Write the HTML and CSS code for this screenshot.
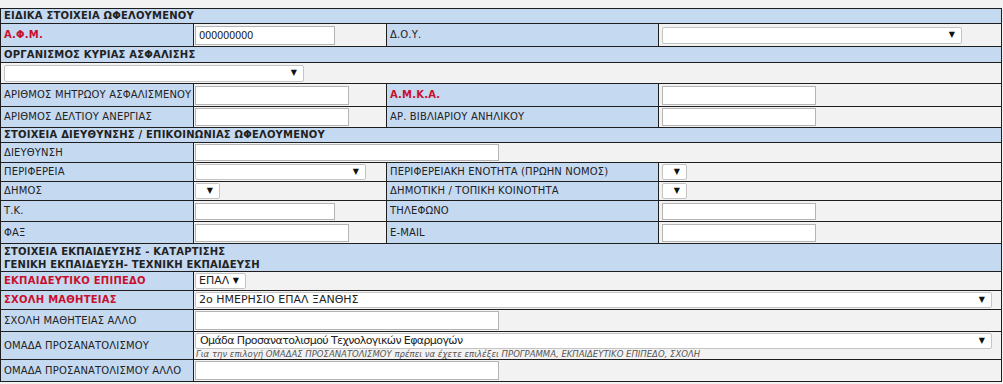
FILE: index.html
```html
<!DOCTYPE html>
<html lang="el">
<head>
<meta charset="utf-8">
<title>Ειδικά στοιχεία ωφελούμενου</title>
<link rel="stylesheet" href="styles.css">
</head>
<body>
<div class="page">
<table class="form">
  <colgroup>
    <col class="c1"><col class="c2"><col class="c3"><col class="c4">
  </colgroup>
  <tr class="hdr r15"><td colspan="4">ΕΙΔΙΚΑ ΣΤΟΙΧΕΙΑ ΩΦΕΛΟΥΜΕΝΟΥ</td></tr>
  <tr class="r23">
    <td class="lbl req">Α.Φ.Μ.</td>
    <td class="val"><input class="inp w140 num" type="text" value="000000000"></td>
    <td class="lbl">Δ.Ο.Υ.</td>
    <td class="val v4"><span class="sw"><select class="sel w300"><option></option></select></span></td>
  </tr>
  <tr class="hdr r16"><td colspan="4">ΟΡΓΑΝΙΣΜΟΣ ΚΥΡΙΑΣ ΑΣΦΑΛΙΣΗΣ</td></tr>
  <tr class="r21">
    <td class="val vfull" colspan="4"><span class="sw"><select class="sel w300"><option></option></select></span></td>
  </tr>
  <tr class="r23">
    <td class="lbl">ΑΡΙΘΜΟΣ ΜΗΤΡΩΟΥ ΑΣΦΑΛΙΣΜΕΝΟΥ</td>
    <td class="val"><input class="inp w154" type="text"></td>
    <td class="lbl req">Α.Μ.Κ.Α.</td>
    <td class="val v4"><input class="inp w154" type="text"></td>
  </tr>
  <tr class="r21">
    <td class="lbl">ΑΡΙΘΜΟΣ ΔΕΛΤΙΟΥ ΑΝΕΡΓΙΑΣ</td>
    <td class="val"><input class="inp w154 h18" type="text"></td>
    <td class="lbl">ΑΡ. ΒΙΒΛΙΑΡΙΟΥ ΑΝΗΛΙΚΟΥ</td>
    <td class="val v4"><input class="inp w154 h18" type="text"></td>
  </tr>
  <tr class="hdr r15"><td colspan="4">ΣΤΟΙΧΕΙΑ ΔΙΕΥΘΥΝΣΗΣ / ΕΠΙΚΟΙΝΩΝΙΑΣ ΩΦΕΛΟΥΜΕΝΟΥ</td></tr>
  <tr class="r20">
    <td class="lbl">ΔΙΕΥΘΥΝΣΗ</td>
    <td class="val" colspan="3"><input class="inp w304 h17" type="text"></td>
  </tr>
  <tr class="r19">
    <td class="lbl">ΠΕΡΙΦΕΡΕΙΑ</td>
    <td class="val"><span class="sw"><select class="sel w171"><option></option></select></span></td>
    <td class="lbl">ΠΕΡΙΦΕΡΕΙΑΚΗ ΕΝΟΤΗΤΑ (ΠΡΩΗΝ ΝΟΜΟΣ)</td>
    <td class="val v4"><span class="sw"><select class="sel w25"><option></option></select></span></td>
  </tr>
  <tr class="r19">
    <td class="lbl">ΔΗΜΟΣ</td>
    <td class="val"><span class="sw"><select class="sel w25"><option></option></select></span></td>
    <td class="lbl">ΔΗΜΟΤΙΚΗ / ΤΟΠΙΚΗ ΚΟΙΝΟΤΗΤΑ</td>
    <td class="val v4"><span class="sw"><select class="sel w25"><option></option></select></span></td>
  </tr>
  <tr class="r21">
    <td class="lbl">Τ.Κ.</td>
    <td class="val"><input class="inp w140 h17" type="text"></td>
    <td class="lbl">ΤΗΛΕΦΩΝΟ</td>
    <td class="val v4"><input class="inp w154 h17" type="text"></td>
  </tr>
  <tr class="r22">
    <td class="lbl">ΦΑΞ</td>
    <td class="val"><input class="inp w154 h18" type="text"></td>
    <td class="lbl">E-MAIL</td>
    <td class="val v4"><input class="inp w154 h18" type="text"></td>
  </tr>
  <tr class="hdr hdr2 r28"><td colspan="4">ΣΤΟΙΧΕΙΑ ΕΚΠΑΙΔΕΥΣΗΣ - ΚΑΤΑΡΤΙΣΗΣ<br>ΓΕΝΙΚΗ ΕΚΠΑΙΔΕΥΣΗ- ΤΕΧΝΙΚΗ ΕΚΠΑΙΔΕΥΣΗ</td></tr>
  <tr class="r19">
    <td class="lbl req">ΕΚΠΑΙΔΕΥΤΙΚΟ ΕΠΙΠΕΔΟ</td>
    <td class="val" colspan="3"><span class="sw"><select class="sel w51"><option>ΕΠΑΛ</option></select></span></td>
  </tr>
  <tr class="r19">
    <td class="lbl req">ΣΧΟΛΗ ΜΑΘΗΤΕΙΑΣ</td>
    <td class="val" colspan="3"><span class="sw"><select class="sel wfull"><option>2ο ΗΜΕΡΗΣΙΟ ΕΠΑΛ ΞΑΝΘΗΣ</option></select></span></td>
  </tr>
  <tr class="r22">
    <td class="lbl">ΣΧΟΛΗ ΜΑΘΗΤΕΙΑΣ ΑΛΛΟ</td>
    <td class="val" colspan="3"><input class="inp w304" type="text"></td>
  </tr>
  <tr class="r28">
    <td class="lbl">ΟΜΑΔΑ ΠΡΟΣΑΝΑΤΟΛΙΣΜΟΥ</td>
    <td class="val vtop" colspan="3">
      <span class="sw"><select class="sel wfull lower"><option>Ομάδα Προσανατολισμού Τεχνολογικών Εφαρμογών</option></select></span>
      <div class="note">Για την επιλογή ΟΜΑΔΑΣ ΠΡΟΣΑΝΑΤΟΛΙΣΜΟΥ πρέπει να έχετε επιλέξει ΠΡΟΓΡΑΜΜΑ, ΕΚΠΑΙΔΕΥΤΙΚΟ ΕΠΙΠΕΔΟ, ΣΧΟΛΗ</div>
    </td>
  </tr>
  <tr class="r22">
    <td class="lbl">ΟΜΑΔΑ ΠΡΟΣΑΝΑΤΟΛΙΣΜΟΥ ΑΛΛΟ</td>
    <td class="val" colspan="3"><input class="inp w304" type="text"></td>
  </tr>
</table>
</div>
</body>
</html>
```

FILE: styles.css
```css
html, body {
  margin: 0;
  padding: 0;
  background: #f2f2f2;
}
.page {
  padding-top: 8px;
}
.form {
  border-collapse: collapse;
  table-layout: fixed;
  width: 1001px;
  font-family: "DejaVu Sans", Verdana, sans-serif;
  font-size: 10px;
  color: #222;
}
.c1 { width: 193px; }
.c2 { width: 193px; }
.c3 { width: 272px; }
.c4 { width: 343px; }
.form td {
  border: 1px solid #1e1e1e;
  padding: 0 1px 0 3px;
  vertical-align: middle;
  white-space: nowrap;
  overflow: hidden;
  line-height: 12px;
}
.hdr td {
  background: #c5d9f1;
  font-weight: bold;
  letter-spacing: 0.2px;
}
.hdr2 td {
  line-height: 13px;
  padding-top: 1px;
}
.form td.lbl {
  background: #c5d9f1;
  letter-spacing: 0.15px;
}
.form td.req {
  color: #c8102e;
  font-weight: bold;
  letter-spacing: 0.25px;
}
.form td.val {
  background: #f2f2f2;
  padding-left: 1px;
}
.form td.v4 { padding-left: 3px; }
.form td.vfull { padding-left: 3px; }
.form td.vtop { vertical-align: top; padding-top: 1px; }
.r15 { height: 15px; }
.r16 { height: 16px; }
.r19 { height: 19px; }
.r20 { height: 20px; }
.r21 { height: 21px; }
.r22 { height: 22px; }
.r23 { height: 23px; }
.r28 { height: 28px; }
.inp {
  box-sizing: border-box;
  height: 19px;
  margin: 0;
  padding: 0 3px;
  border: 1px solid #b4b4b4;
  background: #fff;
  font-family: "DejaVu Sans", Verdana, sans-serif;
  font-size: 11px;
  color: #222;
  vertical-align: middle;
  outline: none;
}
.num {
  font-size: 10px;
  letter-spacing: -0.35px;
}
.h18 { height: 18px; }
.h17 { height: 17px; }
.w140 { width: 140px; }
.w154 { width: 154px; }
.w304 { width: 304px; }
.sw {
  position: relative;
  display: inline-block;
  vertical-align: middle;
}
.sw::after {
  content: "▼";
  position: absolute;
  right: 7px;
  top: 50%;
  transform: translateY(-50%);
  font-size: 8px;
  line-height: 8px;
  color: #111;
  pointer-events: none;
}
.sel {
  -webkit-appearance: none;
  appearance: none;
  box-sizing: border-box;
  display: block;
  height: 16px;
  margin: 0;
  padding: 0 16px 0 3px;
  border: 1px solid #c4c4c4;
  border-radius: 2px;
  background: #fff;
  font-family: "DejaVu Sans", Verdana, sans-serif;
  font-size: 11px;
  line-height: 14px;
  color: #222;
  outline: none;
}
.w300 { width: 300px; height: 17px; }
.w171 { width: 171px; }
.w25 { width: 25px; }
.w51 { width: 51px; }
.wfull { width: 797px; }
.lower { letter-spacing: -0.6px; padding-left: 4px; }
.note {
  font-family: "DejaVu Sans", Verdana, sans-serif;
  font-size: 8.5px;
  font-style: italic;
  line-height: 10px;
  color: #555;
  padding-left: 1px;
}
```
